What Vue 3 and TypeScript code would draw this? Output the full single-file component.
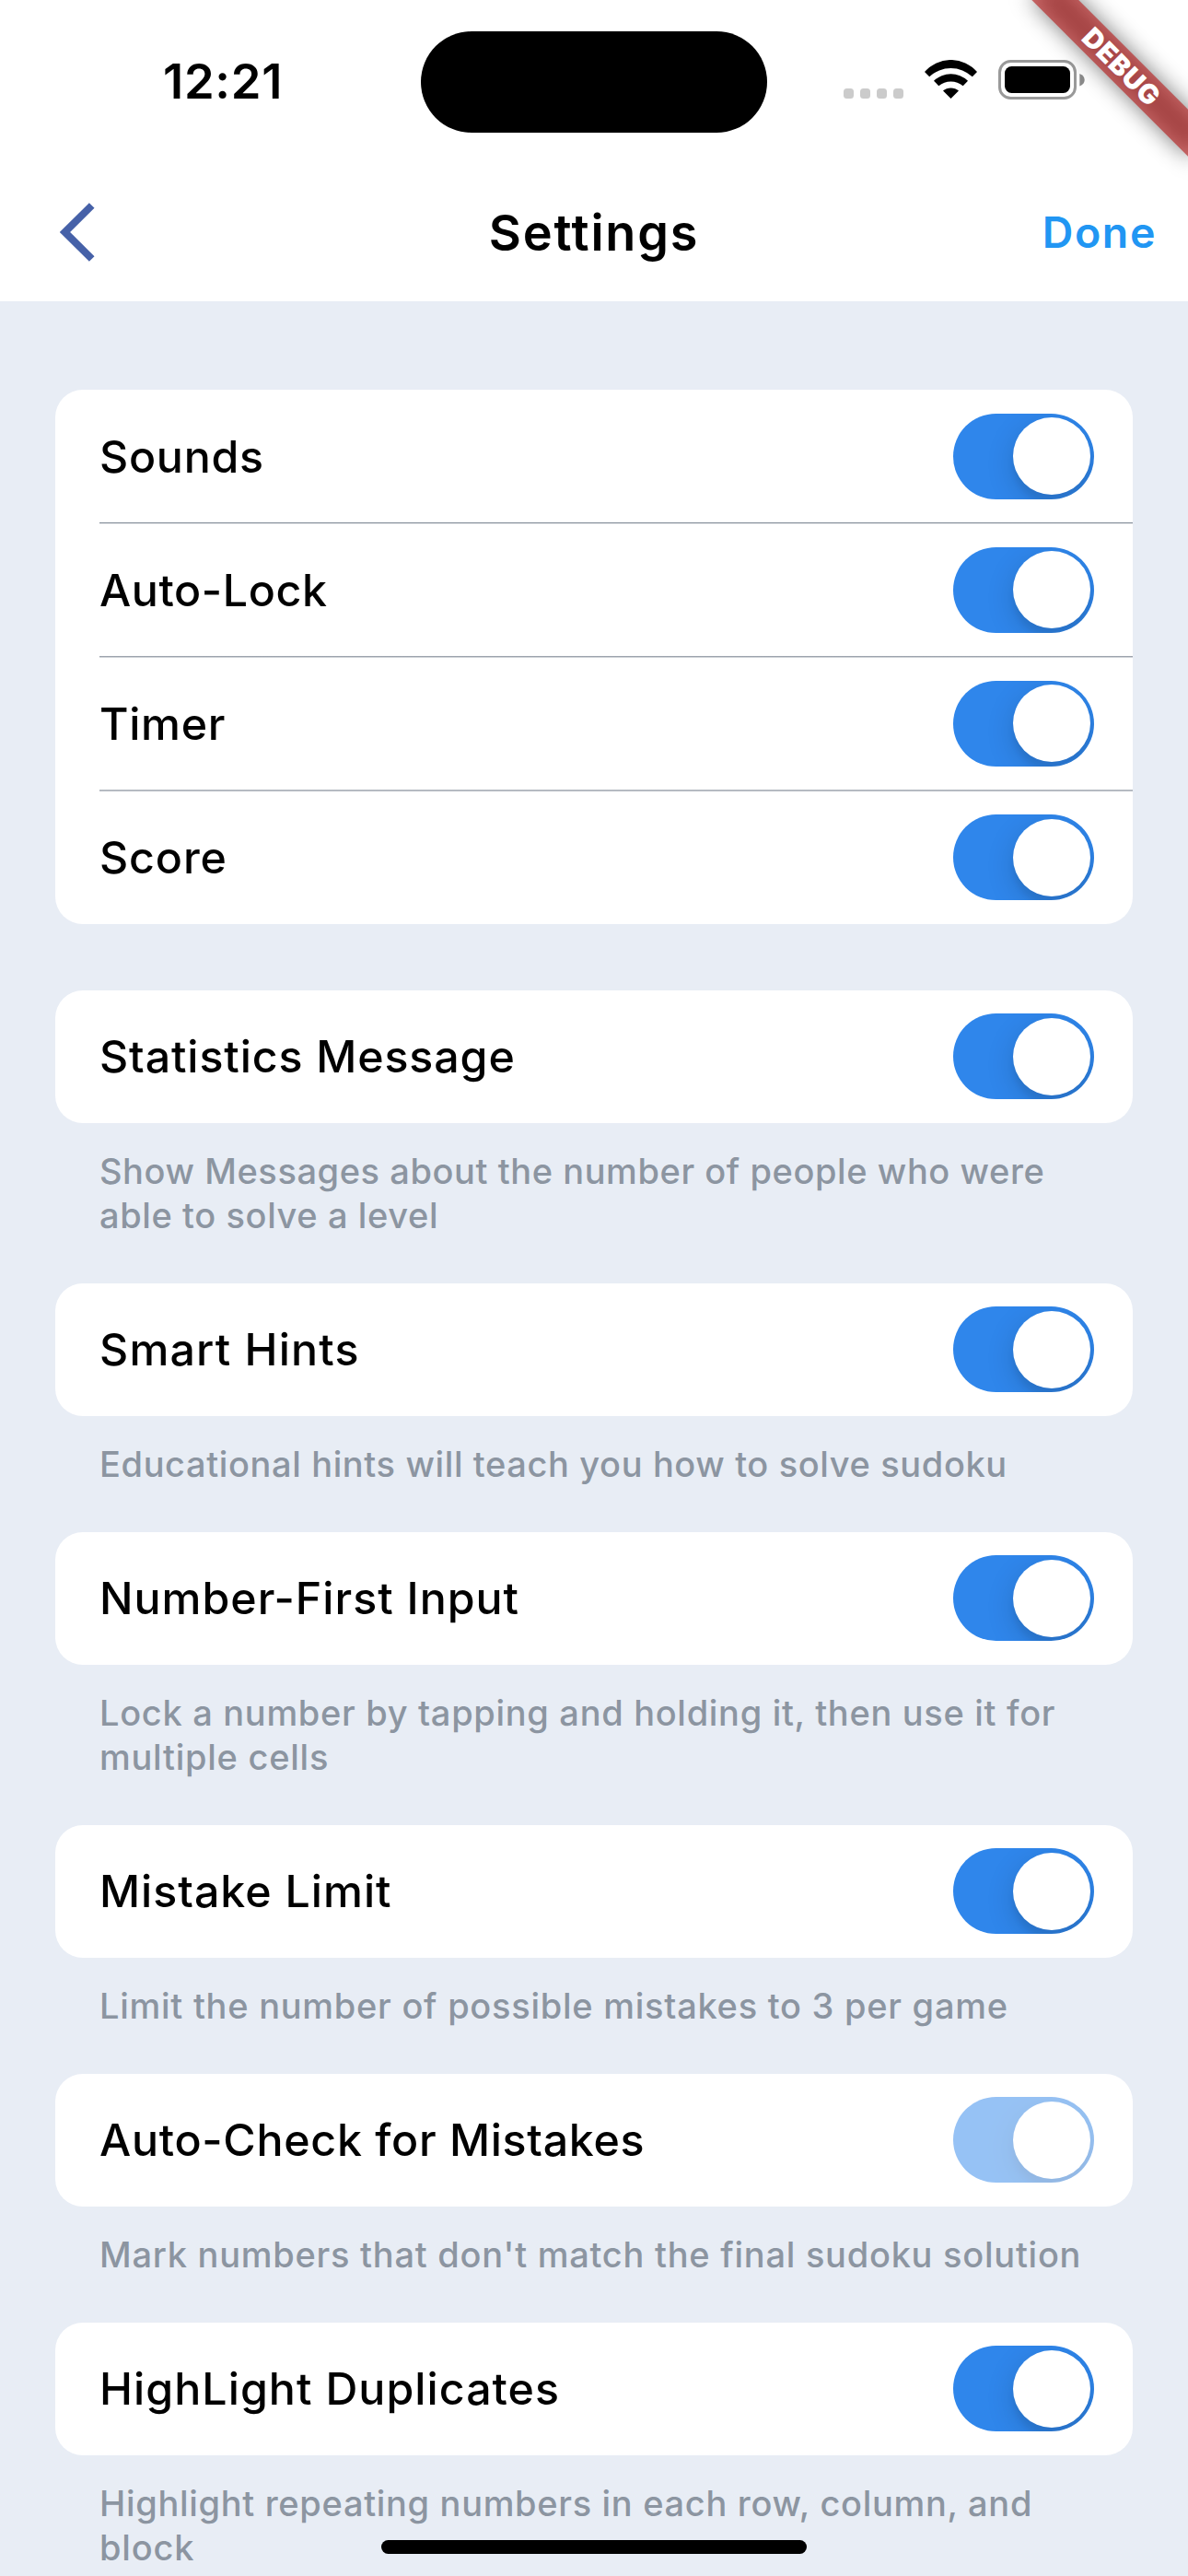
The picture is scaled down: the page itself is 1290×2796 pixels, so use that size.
<script setup lang="ts">
import { reactive } from 'vue'

// Tracking is the letter spacing in pixels.
interface Setting {
  label: string
  tracking: number
  on: boolean
  disabled?: boolean
}

interface CaptionLine {
  text: string
  tracking: number
}

interface Section {
  settings: Setting[]
  caption?: CaptionLine[]
}

const sections = reactive<Section[]>([
  {
    settings: [
      { label: 'Sounds', tracking: 0.75, on: true },
      { label: 'Auto-Lock', tracking: 0.6, on: true },
      { label: 'Timer', tracking: 0.7, on: true },
      { label: 'Score', tracking: 0.9, on: true },
    ],
  },
  {
    settings: [{ label: 'Statistics Message', tracking: 0.9, on: true }],
    caption: [
      { text: 'Show Messages about the number of people who were', tracking: 0.57 },
      { text: 'able to solve a level', tracking: 0.6 },
    ],
  },
  {
    settings: [{ label: 'Smart Hints', tracking: 1.2, on: true }],
    caption: [{ text: 'Educational hints will teach you how to solve sudoku', tracking: 0.62 }],
  },
  {
    settings: [{ label: 'Number-First Input', tracking: 1, on: true }],
    caption: [
      { text: 'Lock a number by tapping and holding it, then use it for', tracking: 0.69 },
      { text: 'multiple cells', tracking: 0.75 },
    ],
  },
  {
    settings: [{ label: 'Mistake Limit', tracking: 1, on: true }],
    caption: [{ text: 'Limit the number of possible mistakes to 3 per game', tracking: 0.74 }],
  },
  {
    settings: [{ label: 'Auto-Check for Mistakes', tracking: 0.72, on: true, disabled: true }],
    caption: [{ text: "Mark numbers that don't match the final sudoku solution", tracking: 0.74 }],
  },
  {
    settings: [{ label: 'HighLight Duplicates', tracking: 1.05, on: true }],
    caption: [
      { text: 'Highlight repeating numbers in each row, column, and', tracking: 0.68 },
      { text: 'block', tracking: 0.8 },
    ],
  },
])

function toggle(setting: Setting): void {
  if (!setting.disabled) setting.on = !setting.on
}

// Hairlines are 1.2px tall, so each one covers its two pixel rows by a different share.
function hairline(index: number): Record<string, string> {
  const offset = (index - 1) * 0.2
  const top = `rgba(132, 141, 153, ${(1 - offset).toFixed(1)})`
  const bottom = `rgba(132, 141, 153, ${(0.2 + offset).toFixed(1)})`
  return { background: `linear-gradient(${top} 50%, ${bottom} 50%)` }
}
</script>

<template>
  <div class="screen">
    <header class="header">
      <div class="status-bar">
        <div class="status-side">
          <span class="clock">12:21</span>
        </div>
        <div class="island"></div>
        <div class="status-side status-icons">
          <div class="signal"><i></i><i></i><i></i><i></i></div>
          <svg class="wifi" width="57" height="42" viewBox="0 0 57 42">
            <path d="M0 13A37.7 37.7 0 0 1 57 13L51.8 18.3A33.8 33.8 0 0 0 5.2 18.3Z" />
            <path d="M10 22.7A26.5 26.5 0 0 1 47 22.7L41.7 28.2A20.9 20.9 0 0 0 15.3 28.2Z" />
            <path d="M20 33.6A13 13 0 0 1 37 33.6L28.5 42Z" />
          </svg>
          <svg class="battery" width="95" height="43" viewBox="0 0 95 43">
            <rect x="1.5" y="1.5" width="82" height="40" rx="12" fill="none" stroke="#999" stroke-width="3" />
            <rect x="7" y="7" width="71" height="29" rx="7.5" />
            <path d="M88.3 15C95.5 17.5 95.5 26 88.3 28.500Z" fill="#8a8a8a" />
          </svg>
        </div>
      </div>
      <nav class="nav-bar">
        <button class="back" aria-label="Back">
          <svg width="38" height="64" viewBox="0 0 38 64">
            <path d="M34.700 3L5.500 32L34.700 61" fill="none" stroke="#4661a8" stroke-width="8" />
          </svg>
        </button>
        <h1 class="title">Settings</h1>
        <button class="done">Done</button>
      </nav>
    </header>

    <main class="content">
      <section v-for="(section, s) in sections" :key="s" class="section">
        <div class="card">
          <template v-for="(setting, i) in section.settings" :key="setting.label">
            <div v-if="i > 0" class="divider" :style="hairline(i)"></div>
            <div class="row">
              <span class="label" :style="{ letterSpacing: setting.tracking + 'px' }">{{ setting.label }}</span>
              <button
                class="switch"
                :class="{ on: setting.on, disabled: setting.disabled }"
                role="switch"
                :aria-checked="setting.on"
                :aria-label="setting.label"
                @click="toggle(setting)"
              >
                <span class="thumb"></span>
              </button>
            </div>
          </template>
        </div>
        <p v-if="section.caption" class="caption">
          <span
            v-for="line in section.caption"
            :key="line.text"
            :style="{ letterSpacing: line.tracking + 'px' }"
          >{{ line.text }}</span>
        </p>
      </section>
    </main>

    <div class="home-indicator"></div>
    <div class="banner-clip">
      <div class="banner">
        <div class="banner-shadow"></div>
        <div class="banner-strip">DEBUG</div>
      </div>
    </div>
  </div>
</template>

<style>
html,
body {
  margin: 0;
  background: #e8edf5;
}
</style>

<style scoped>
.screen {
  position: relative;
  width: 1290px;
  height: 2796px;
  overflow: hidden;
  background: #e8edf5;
  font-family: Inter, "Liberation Sans", sans-serif;
  color: #000;
}

button {
  padding: 0;
  border: 0;
  background: none;
  font: inherit;
}

.header {
  height: 327px;
  background: #fff;
}

.status-bar {
  display: flex;
  height: 177px;
}

.status-side {
  width: 457px;
}

.clock {
  display: block;
  padding: 56px 0 0 177px;
  font-size: 52.500px;
  line-height: 64px;
  font-weight: 600;
  letter-spacing: 0.700px;
}

.island {
  width: 376px;
  height: 110px;
  margin-top: 34px;
  border-radius: 55px;
  background: #000;
}

.status-icons {
  display: flex;
  align-items: flex-start;
  padding-top: 65px;
  box-sizing: border-box;
}

.signal {
  display: flex;
  gap: 7px;
  margin: 31px 23px 0 83px;
}

.signal i {
  width: 11px;
  height: 11px;
  border-radius: 3.500px;
  background: #cbcbcb;
}

.battery {
  margin-left: 23px;
}

.nav-bar {
  display: grid;
  grid-template-columns: 1fr auto 1fr;
  align-items: center;
  height: 150px;
}

.back {
  justify-self: start;
  height: 64px;
  margin-left: 65px;
}

.back svg {
  display: block;
}

.title {
  margin: 0;
  padding-top: 2px;
  font-size: 54px;
  line-height: 64px;
  font-weight: 600;
  letter-spacing: 1.800px;
}

.done {
  justify-self: end;
  margin-right: 34px;
  font-size: 46.500px;
  line-height: 56px;
  font-weight: 600;
  letter-spacing: 1.600px;
  color: #2196f3;
}

.content {
  padding: 96px 60px 0;
}

.card {
  overflow: hidden;
  border-radius: 30px;
  background: #fff;
}

.section:first-child {
  margin-bottom: 72px;
}

.row {
  display: flex;
  align-items: center;
  justify-content: space-between;
  height: 144px;
  padding: 0 42px 0 48px;
}

.divider {
  height: 2px;
  margin: 0 0 -0.800px 48px;
}

.label {
  padding-top: 1.500px;
  font-size: 48.300px;
  line-height: 56px;
  font-weight: 500;
  white-space: nowrap;
}

.switch {
  display: flex;
  align-items: center;
  width: 153px;
  height: 93px;
  padding: 0 4.500px;
  overflow: hidden;
  border-radius: 46.500px;
  background: #d9dde4;
}

.switch.on {
  justify-content: flex-end;
  background: #2f86eb;
}

.switch.disabled {
  opacity: 0.5;
}

.thumb {
  width: 84px;
  height: 84px;
  border-radius: 50%;
  background: #fff;
  box-shadow: 0 9px 31px rgba(0, 0, 0, 0.15), 0 9px 6.500px rgba(0, 0, 0, 0.06);
}

.caption {
  display: flex;
  flex-direction: column;
  margin: 0;
  padding: 28px 0 50px 48px;
  font-size: 38px;
  line-height: 48px;
  font-weight: 500;
  white-space: nowrap;
  color: #8c95a1;
}

.home-indicator {
  position: absolute;
  left: 414px;
  top: 2757px;
  width: 462px;
  height: 15px;
  border-radius: 7.500px;
  background: #000;
}

.banner-clip {
  position: absolute;
  top: 0;
  right: 0;
  width: 260px;
  height: 260px;
  overflow: hidden;
  pointer-events: none;
}

/* Rotated about the top right corner of the screen. */
.banner {
  position: absolute;
  top: 84px;
  right: -120px;
  width: 240px;
  height: 36px;
  transform: rotate(45deg);
  transform-origin: 120px -84px;
}

.banner-shadow {
  position: absolute;
  inset: 0;
  background: rgba(0, 0, 0, 0.5);
  filter: blur(12px);
}

.banner-strip {
  position: relative;
  height: 36px;
  background: rgba(183, 28, 28, 0.627);
  color: #fff;
  font-size: 29.500px;
  line-height: 36px;
  font-weight: 900;
  letter-spacing: 0.600px;
  text-indent: 0.600px;
  text-align: center;
}
</style>
